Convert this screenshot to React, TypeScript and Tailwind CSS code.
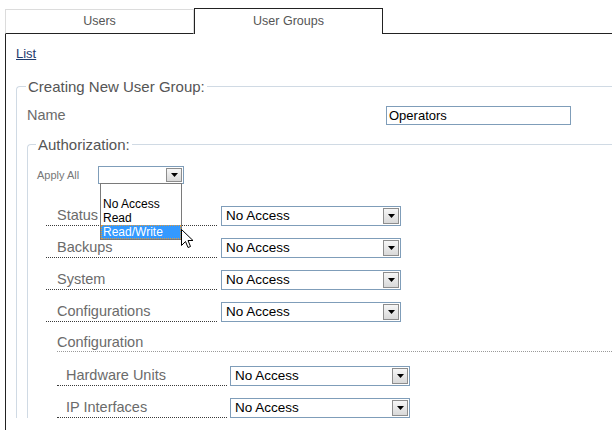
import React from 'react';

const Arrow: React.FC = () => (
  <svg width="7" height="4" viewBox="0 0 7 4">
    <path d="M0 0h7L3.5 4z" fill="#000" />
  </svg>
);

// classic windows-ish combo box, drawn by hand so it looks the same everywhere
const Combo: React.FC<{ value?: string; w?: string; h?: string; children?: React.ReactNode }> = ({
  value,
  w = 'w-[180px]',
  h = 'h-[20px]',
  children,
}) => (
  <div className={`relative flex ${w} ${h} shrink-0 items-center border border-[#7f9db9] bg-white`}>
    <span className="flex-1 pl-[4px] text-[13.5px] leading-none text-black">{value}</span>
    <span className="mr-px flex h-[calc(100%-2px)] w-[16px] items-center justify-center border border-[#8d8d8d] bg-gradient-to-b from-[#f6f6f6] to-[#d9d9d9]">
      <Arrow />
    </span>
    {children}
  </div>
);

const Row: React.FC<{ label: string; nested?: boolean }> = ({ label, nested }) => (
  <div className="flex items-end">
    <div
      className={`flex h-[20px] items-center border-b border-dotted border-[#3a3a3a] text-[14.5px] text-[#6b6b6b] ${
        nested ? 'w-[170px] pl-[9px]' : 'w-[171px] pl-[11px]'
      }`}
    >
      {label}
    </div>
    <div className={nested ? 'ml-[3px]' : 'ml-[4px]'}>
      <Combo value="No Access" />
    </div>
  </div>
);

const App: React.FC = () => {
  return (
    <div className="relative flex h-[430px] w-[612px] flex-col overflow-hidden bg-white pl-[5px] pt-[8px] font-['Liberation_Sans',Arial,sans-serif]">
      {/* Tabs */}
      <div className="flex items-end">
        <div className="flex h-[25px] w-[189px] items-center justify-center border-t border-r border-l border-b border-t-[#dcdcdc] border-r-[#dcdcdc] border-l-[#dcdcdc] border-b-[#222] text-[12.5px] text-[#555]">
          Users
        </div>
        <div className="flex h-[26px] w-[189px] items-center justify-center border-t border-r border-l border-[#222] text-[12.5px] text-[#555]">
          User Groups
        </div>
        <div className="flex-1 border-b border-[#222]" />
      </div>

      {/* Panel */}
      <div className="flex-1 border-l border-[#222] pl-[10px] pt-[12px]">
        <a className="block text-[13px] leading-[15px] text-[#1f3c6e] underline">List</a>

        <fieldset className="mt-[17px] rounded-tl-[4px] border-t border-l border-[#d0dae4] pl-[10px]">
          <legend className="ml-[-1px] px-[2px] text-[15px] leading-[17px] text-[#555]">
            Creating New User Group:
          </legend>

          <div className="mt-[11px] flex h-[19px] items-center">
            <div className="w-[359px] text-[14.5px] text-[#6b6b6b]">Name</div>
            <div className="flex h-[19px] w-[185px] items-center border border-[#7f9db9] pl-[2px] text-[13px] text-black">
              Operators
            </div>
          </div>

          <fieldset className="mt-[11px] rounded-tl-[4px] border-t border-l border-[#d0dae4] pl-[9px]">
            <legend className="ml-[-1px] px-[2px] text-[15px] leading-[17px] text-[#555]">
              Authorization:
            </legend>

            <div className="mt-[13px] flex h-[18px] items-center">
              <div className="w-[61px] text-[11px] text-[#777]">Apply All</div>
              <Combo w="w-[86px]" h="h-[18px]">
                {/* open dropdown list */}
                <div className="absolute left-[1px] top-[16px] z-10 w-[82px] border border-[#7a7a7a] bg-white text-[12px] leading-[14px] text-black">
                  <div className="h-[13px]" />
                  <div className="h-[14px] pl-[2px]">No Access</div>
                  <div className="h-[14px] pl-[2px]">Read</div>
                  <div className="h-[14px] border border-dotted border-[#e09a3c] bg-[#3399ff] pl-[1px] leading-[12px] text-white">
                    Read/Write
                  </div>
                </div>
              </Combo>
            </div>

            <div className="mt-[22px] flex flex-col gap-[12px] pl-[9px]">
              <Row label="Status" />
              <Row label="Backups" />
              <Row label="System" />
              <Row label="Configurations" />
              <div className="ml-[11px] flex flex-col">
                <div className="flex h-[18px] items-center border-b border-dotted border-[#9a9a9a] pt-[1px] text-[14.5px] text-[#6b6b6b]">
                  Configuration
                </div>
                <div className="mt-[14px] flex flex-col gap-[12px]">
                  <Row label="Hardware Units" nested />
                  <Row label="IP Interfaces" nested />
                </div>
              </div>
            </div>
          </fieldset>
        </fieldset>
      </div>

      {/* mouse pointer */}
      <svg className="absolute left-[181px] top-[229px] z-20" width="13" height="20" viewBox="0 0 13 20">
        <path d="M0.5 0.5V16.5L4.5 12.5L7 18.5L9.5 17.5L7 11.5H12Z" fill="#fff" stroke="#000" strokeWidth="1" strokeLinejoin="round" />
      </svg>
    </div>
  );
};

export default App;
